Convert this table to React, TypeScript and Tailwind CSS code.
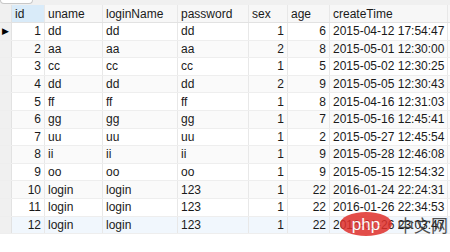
import React from "react";

type Row = {
  id: number;
  uname: string;
  loginName: string;
  password: string;
  sex: number;
  age: number;
  createTime: string;
};

const rows: Row[] = [
  { id: 1, uname: "dd", loginName: "dd", password: "dd", sex: 1, age: 6, createTime: "2015-04-12 17:54:47" },
  { id: 2, uname: "aa", loginName: "aa", password: "aa", sex: 2, age: 8, createTime: "2015-05-01 12:30:00" },
  { id: 3, uname: "cc", loginName: "cc", password: "cc", sex: 1, age: 5, createTime: "2015-05-02 12:30:25" },
  { id: 4, uname: "dd", loginName: "dd", password: "dd", sex: 2, age: 9, createTime: "2015-05-05 12:30:43" },
  { id: 5, uname: "ff", loginName: "ff", password: "ff", sex: 1, age: 8, createTime: "2015-04-16 12:31:03" },
  { id: 6, uname: "gg", loginName: "gg", password: "gg", sex: 1, age: 7, createTime: "2015-05-16 12:45:41" },
  { id: 7, uname: "uu", loginName: "uu", password: "uu", sex: 1, age: 2, createTime: "2015-05-27 12:45:54" },
  { id: 8, uname: "ii", loginName: "ii", password: "ii", sex: 1, age: 9, createTime: "2015-05-28 12:46:08" },
  { id: 9, uname: "oo", loginName: "oo", password: "oo", sex: 1, age: 9, createTime: "2015-05-15 12:54:32" },
  { id: 10, uname: "login", loginName: "login", password: "123", sex: 1, age: 22, createTime: "2016-01-24 22:24:31" },
  { id: 11, uname: "login", loginName: "login", password: "123", sex: 1, age: 22, createTime: "2016-01-26 22:34:53" },
  { id: 12, uname: "login", loginName: "login", password: "123", sex: 1, age: 22, createTime: "2016-01-26 23:03:47" },
];

const cell = "h-full flex items-center px-[3px] border-r border-[#e8e8e8] overflow-hidden whitespace-nowrap";

const App: React.FC = () => {
  return (
    <div
      className="relative w-[450px] h-[252px] bg-white overflow-hidden text-[12px] text-[#1a1a1a]"
      style={{ fontFamily: '"Liberation Sans", Arial, sans-serif' }}
    >
      {/* top strip */}
      <div className="h-[5px] bg-[#f0f0f0] flex">
        <div className="w-[33px] h-[4px] bg-white border border-t-0 border-[#c8c8c8] rounded-b-[4px]" />
      </div>

      {/* header */}
      <div className="flex h-[18px] bg-[#f7f7f7] border-b border-[#e2e2e2]">
        <div className="w-[12px] h-full bg-[#f0f0f0] border-r border-[#e2e2e2]" />
        <div className={`${cell} w-[33px] bg-[#d9ebf9]`}>id</div>
        <div className={`${cell} w-[58px]`}>uname</div>
        <div className={`${cell} w-[75px]`}>loginName</div>
        <div className={`${cell} w-[71px]`}>password</div>
        <div className={`${cell} w-[39px]`}>sex</div>
        <div className={`${cell} w-[42px]`}>age</div>
        <div className={`${cell} w-[118px]`}>createTime</div>
      </div>

      {/* rows */}
      {rows.map((r, i) => {
        const bg = r.id === 12 ? "bg-[#f1f7fd]" : i % 2 === 0 ? "bg-white" : "bg-[#fafafa]";
        return (
          <div key={r.id} className={`flex h-[17.6px] border-b border-[#eeeeee] ${bg}`}>
            <div className="w-[12px] h-full bg-[#f0f0f0] border-r border-[#e2e2e2] flex items-center justify-center">
              {r.id === 1 && <span className="text-[9px] leading-none text-black">▶</span>}
            </div>
            <div className={`${cell} w-[33px] justify-end`}>{r.id}</div>
            <div className={`${cell} w-[58px]`}>{r.uname}</div>
            <div className={`${cell} w-[75px]`}>{r.loginName}</div>
            <div className={`${cell} w-[71px]`}>{r.password}</div>
            <div className={`${cell} w-[39px] justify-end`}>{r.sex}</div>
            <div className={`${cell} w-[42px] justify-end`}>{r.age}</div>
            <div className={`${cell} w-[118px]`}>{r.createTime}</div>
          </div>
        );
      })}

      {/* watermark */}
      <div className="absolute left-[340px] top-[212px] flex items-center gap-[5px] whitespace-nowrap opacity-85">
        <div className="w-[52px] h-[24px] shrink-0 rounded-[50%] bg-[#e0302b] flex items-center justify-center">
          <span className="text-white text-[17px] leading-none" style={{ fontFamily: '"Liberation Sans", sans-serif' }}>
            php
          </span>
        </div>
        <span
          className="text-[17px] leading-none text-[#333] whitespace-nowrap"
          style={{ fontFamily: '"Noto Sans CJK SC", sans-serif' }}
        >
          中文网
        </span>
      </div>
    </div>
  );
};

export default App;
